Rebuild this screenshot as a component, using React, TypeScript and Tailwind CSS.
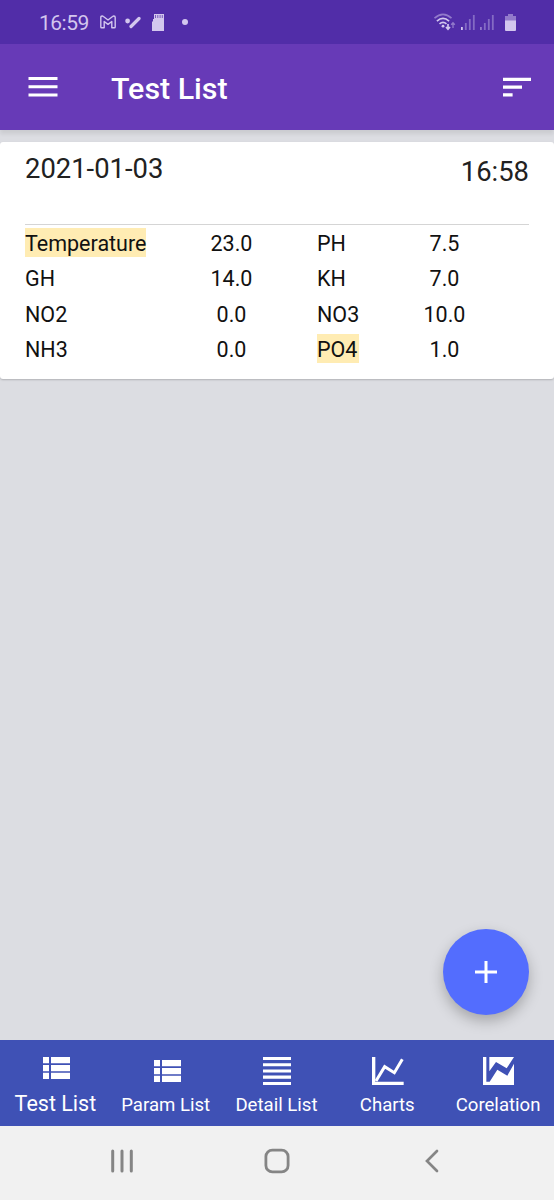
import type { ReactNode } from "react";

type Reading = {
  name: string;
  value: string;
  alert?: boolean;
};

const readings: Reading[] = [
  { name: "Temperature", value: "23.0", alert: true },
  { name: "PH", value: "7.5" },
  { name: "GH", value: "14.0" },
  { name: "KH", value: "7.0" },
  { name: "NO2", value: "0.0" },
  { name: "NO3", value: "10.0" },
  { name: "NH3", value: "0.0" },
  { name: "PO4", value: "1.0", alert: true },
];

function StatusBar() {
  return (
    <div className="flex h-11 items-center bg-[#512DA8] pl-[39px] pr-[38px] text-[#d3c7ee]">
      <span className="w-[61px] pt-[2px] text-[21px] leading-none tracking-[-0.5px]">
        16:59
      </span>

      {/* notification icons */}
      <svg className="h-[14px] w-4" viewBox="0 0 16 14" fill="none" stroke="currentColor" strokeWidth="1.4" strokeLinejoin="round">
        <path d="M.8 2.4Q.8 1 2.100 1q.7 0 1.300.5L8 5l4.600-3.500q.6-.5 1.300-.5 1.300 0 1.300 1.400v9.600q0 .8-.8.8h-2.600V6.500L8 9.400 4.200 6.500v6.300H1.600q-.8 0-.8-.8z" />
      </svg>
      <svg className="ml-[9px] h-[14px] w-4" viewBox="0 0 16 14" fill="currentColor">
        <circle cx="2.600" cy="6" r="2.400" />
        <path d="M6 11.500L14 3.500" stroke="currentColor" strokeWidth="3.200" strokeLinecap="round" />
      </svg>
      <svg className="ml-[11px] h-[17px] w-3" viewBox="0 0 12 17" fill="currentColor">
        <path d="M2 0h10v17H0V8l1-1V5H2z" />
        <path d="M3.500 1v3M5.800 1v3M8.100 1v3M10.300 1v3" stroke="#512DA8" strokeWidth=".7" />
      </svg>
      <span className="ml-[18px] size-1.5 rounded-full bg-current" />

      {/* connectivity and battery */}
      <svg className="ml-auto h-[18px] w-[22px]" viewBox="0 0 22 18" fill="none" stroke="currentColor" strokeWidth="1.700">
        <path d="M.5 5.200Q9-2.500 17.500 5.200" opacity=".5" />
        <path d="M2.900 8.200Q9 2.700 15.100 8.200" />
        <path d="M5.500 10.900Q9 7.900 12.500 10.900" />
        <circle cx="9" cy="13.200" r="1.400" fill="currentColor" stroke="none" />
        <path d="M14 11v5M12 14l2 2.200 2-2.200" />
        <path d="M19 15v-5M17.200 11.800l1.800-2 1.800 2" opacity=".5" strokeWidth="1.300" />
      </svg>
      <Signal first />
      <Signal />
      <svg className="ml-[11px] h-[17px] w-[11px]" viewBox="0 0 11 17" fill="currentColor">
        <path d="M3 0h5v2h3v5H0V2h3z" opacity=".5" />
        <path d="M0 6.500h11V16q0 1-1 1H1q-1 0-1-1z" />
      </svg>
    </div>
  );
}

function Signal({ first = false }: { first?: boolean }) {
  return (
    <svg className="ml-[5px] h-[15px] w-[14px]" viewBox="0 0 14 15" fill="currentColor">
      <rect y="12" width="1.800" height="3" opacity={first ? 1 : 0.5} />
      <rect x="3.900" y="8" width="1.800" height="7" opacity=".4" />
      <rect x="7.900" y="4" width="1.800" height="11" opacity=".4" />
      <rect x="11.900" width="1.800" height="15" opacity=".4" />
    </svg>
  );
}

function AppBar() {
  return (
    <header className="relative flex h-[86px] items-center bg-[#673AB7] pl-[28px] pr-[23px] text-white shadow-[0_4px_4px_rgba(0,0,0,0.08)]">
      <svg className="h-5 w-[30px]" viewBox="0 0 30 20" fill="currentColor">
        <path d="M.5 0h29v3H.5zM.5 8.200h29v3H.5zM.5 16.400h29v3H.5z" />
      </svg>
      <h1 className="ml-[53px] pt-1 text-[30.400px] font-medium leading-none">Test List</h1>
      <svg className="ml-auto h-5 w-7" viewBox="0 0 28 20" fill="currentColor">
        <path d="M0 .8h28V4H0zM0 8.500h19v3.200H0zM0 16.200h9.600v3.200H0z" />
      </svg>
    </header>
  );
}

function TestCard() {
  return (
    <article className="mt-[12px] h-[237px] rounded-[3px] bg-white px-[25px] shadow-[0_1px_2px_rgba(0,0,0,0.2)]">
      <div className="flex h-[83px] justify-between border-b-[1.500px] border-[#d5d5d5] pt-[11px] text-[27.400px] leading-[33px] text-[#212121]">
        <span>2021-01-03</span>
        <span className="pt-[3px]">16:58</span>
      </div>

      <div className="grid auto-rows-[35.400px] grid-cols-[166px_126px_87px_126px] pt-[3px] text-[21.500px] leading-[31px] text-[#111]">
        {readings.map((reading) => (
          <ReadingCells key={reading.name} reading={reading} />
        ))}
      </div>
    </article>
  );
}

function ReadingCells({ reading }: { reading: Reading }) {
  return (
    <>
      <div className="whitespace-nowrap">
        <span className={reading.alert ? "inline-block h-[29px] min-w-[42px] bg-[#FFECB3]" : "inline-block"}>
          {reading.name}
        </span>
      </div>
      <div className="w-[81px] text-center">{reading.value}</div>
    </>
  );
}

function ViewListIcon() {
  return (
    <svg className="ml-[2px] h-[22px] w-[27px]" viewBox="0 0 27 22" fill="currentColor">
      <path d="M0 0h6v6.300H0zM8 0h19v6.300H8zM0 7.900h6v6.300H0zM8 7.900h19v6.300H8zM0 15.700h6V22H0zM8 15.700h19V22H8z" />
    </svg>
  );
}

function DetailIcon() {
  return (
    <svg className="h-7 w-7" viewBox="0 0 28 28" fill="currentColor">
      <path d="M0 0h28v3.100H0zM0 6.200h28v3.100H0zM0 12.400h28v3.100H0zM0 18.600h28v3.100H0zM0 24.900h28V28H0z" />
    </svg>
  );
}

function ChartIcon() {
  return (
    <svg className="h-7 w-8" viewBox="0 0 96 84" fill="none" stroke="currentColor">
      <path d="M5 0v79h90" strokeWidth="10" />
      <path d="M12 72L38 29l29 18L91 7" strokeWidth="9" />
    </svg>
  );
}

function CorrelationIcon() {
  return (
    <svg className="h-7 w-[31px]" viewBox="0 0 93 84" fill="currentColor">
      <path d="M0 0h10v74h10l23-36 30 18L93 20v64H0z" />
      <path d="M19 0h74L71 34 39 15 19 43z" />
    </svg>
  );
}

type TabProps = {
  label: string;
  icon: ReactNode;
  active?: boolean;
};

function Tab({ label, icon, active = false }: TabProps) {
  return (
    <button className="flex flex-1 basis-0 flex-col items-center whitespace-nowrap">
      <span className={active ? "flex h-[50px] items-center pt-[6px]" : "flex h-[50px] items-center pt-[12px]"}>
        {icon}
      </span>
      <span className={active ? "text-[21.500px] leading-[28px]" : "pr-px text-[18.600px] leading-[30px]"}>
        {label}
      </span>
    </button>
  );
}

function BottomNav() {
  return (
    <nav className="flex h-[86px] bg-[#3F51B5] text-white">
      <Tab label="Test List" icon={<ViewListIcon />} active />
      <Tab label="Param List" icon={<ViewListIcon />} />
      <Tab label="Detail List" icon={<DetailIcon />} />
      <Tab label="Charts" icon={<ChartIcon />} />
      <Tab label="Corelation" icon={<CorrelationIcon />} />
    </nav>
  );
}

function SystemNav() {
  return (
    <div className="flex h-[74px] items-center justify-between bg-[#f1f1f1] pb-1 pl-[110px] pr-[114px] text-[#858585]">
      <svg className="h-6 w-6" viewBox="0 0 24 24" stroke="currentColor" strokeWidth="3" strokeLinecap="round">
        <path d="M2.700 2v20M12 2v20M21.300 2v20" />
      </svg>
      <svg className="mr-1 h-[26px] w-[26px]" viewBox="0 0 26 26" fill="none" stroke="currentColor" strokeWidth="2.800">
        <rect x="1.900" y="2.100" width="22.200" height="21.800" rx="6.500" />
      </svg>
      <svg className="h-6 w-4" viewBox="0 0 16 24" fill="none" stroke="currentColor" strokeWidth="2.700" strokeLinecap="round">
        <path d="M13 2L3 12l10 10" />
      </svg>
    </div>
  );
}

export default function App() {
  return (
    <div className="flex h-[1200px] w-[554px] flex-col overflow-hidden bg-[#DCDDE2] font-[Roboto,sans-serif]">
      <StatusBar />
      <AppBar />

      <main className="relative flex-1">
        <TestCard />

        <button className="absolute bottom-[25px] right-[25px] flex size-[86px] items-center justify-center rounded-full bg-[#536DFE] text-white shadow-[0_6px_14px_rgba(0,0,0,0.25)]">
          <svg className="size-[22px]" viewBox="0 0 22 22" stroke="currentColor" strokeWidth="3">
            <path d="M11 0v22M0 11h22" />
          </svg>
        </button>
      </main>

      <BottomNav />
      <SystemNav />
    </div>
  );
}
